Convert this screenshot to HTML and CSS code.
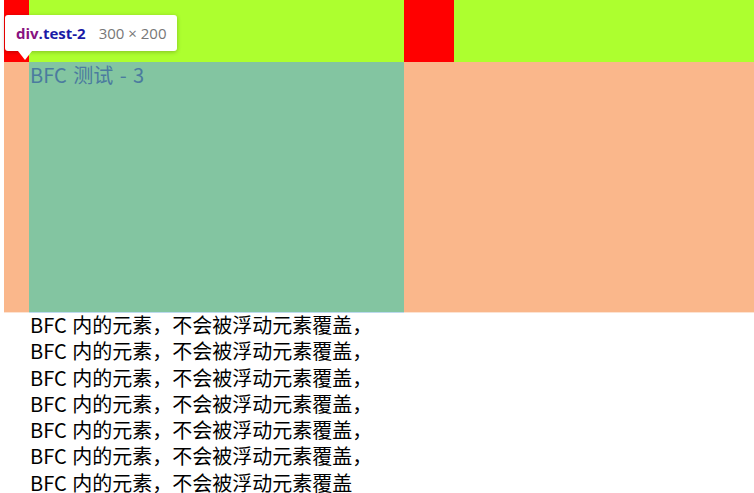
FILE: index.html
```html
<!DOCTYPE html>
<html lang="zh-CN">
<head>
<meta charset="utf-8">
<title>BFC</title>
<link rel="stylesheet" href="styles.css">
</head>
<body>
<div class="page">
  <div class="floats">
    <div class="box red narrow"></div>
    <div class="box green wide"></div>
    <div class="box red mid"></div>
    <div class="box green fill"></div>
  </div>
  <div class="bfc">
    <div class="test-2">BFC 测试 - 3</div>
  </div>
  <div class="lines">
    <p>BFC 内的元素，不会被浮动元素覆盖，</p>
    <p>BFC 内的元素，不会被浮动元素覆盖，</p>
    <p>BFC 内的元素，不会被浮动元素覆盖，</p>
    <p>BFC 内的元素，不会被浮动元素覆盖，</p>
    <p>BFC 内的元素，不会被浮动元素覆盖，</p>
    <p>BFC 内的元素，不会被浮动元素覆盖，</p>
    <p>BFC 内的元素，不会被浮动元素覆盖</p>
  </div>
</div>
<div class="tooltip">
  <span class="tag">div</span><span class="cls">.test-2</span><span class="dims">300 × 200</span>
  <span class="arrow"></span>
</div>
</body>
</html>
```
FILE: styles.css
```css
html, body {
  margin: 0;
  padding: 0;
  background: #ffffff;
  overflow: hidden;
}
.page {
  padding-left: 4px;
  font-family: "Noto Sans CJK SC", "Noto Sans", sans-serif;
}
.floats {
  display: flex;
  height: 62px;
}
.box { height: 62px; }
.red { background: #ff0000; }
.green { background: #adff2f; }
.narrow { width: 25px; }
.wide { width: 375px; }
.mid { width: 50px; }
.fill { flex: 1; }
.bfc {
  background: #fab78b;
  height: 250px;
  padding-left: 25px;
  border-bottom: 1px solid #fde3d2;
}
.test-2 {
  width: 375px;
  height: 250px;
  background: #83c5a1;
  color: #4b7b9f;
  font-size: 20px;
  line-height: 26px;
  padding-left: 1px;
  word-spacing: 2px;
  box-sizing: border-box;
  box-shadow: 0 1px 0 #bcdaee;
}
.lines {
  padding-left: 26px;
  margin-top: -1px;
  color: #000;
  font-size: 20px;
  word-spacing: 1px;
}
.lines p {
  margin: 0;
  line-height: 26.3px;
}
.tooltip {
  position: absolute;
  left: 5px;
  top: 15px;
  width: 172px;
  height: 36px;
  box-sizing: border-box;
  background: #fff;
  border-radius: 3px;
  box-shadow: 0 1px 4px rgba(0,0,0,0.25);
  font-family: "Open Sans", "Noto Sans", sans-serif;
  font-size: 15px;
  line-height: 36px;
  padding-left: 11px;
  white-space: nowrap;
}
.tag { color: #881280; font-weight: 700; }
.cls { color: #1a1aa6; font-weight: 700; }
.dims { color: #777; margin-left: 13px; }
.arrow {
  position: absolute;
  left: 13px;
  top: 36px;
  width: 0;
  height: 0;
  border-left: 7px solid transparent;
  border-right: 7px solid transparent;
  border-top: 9px solid #fff;
}
```
